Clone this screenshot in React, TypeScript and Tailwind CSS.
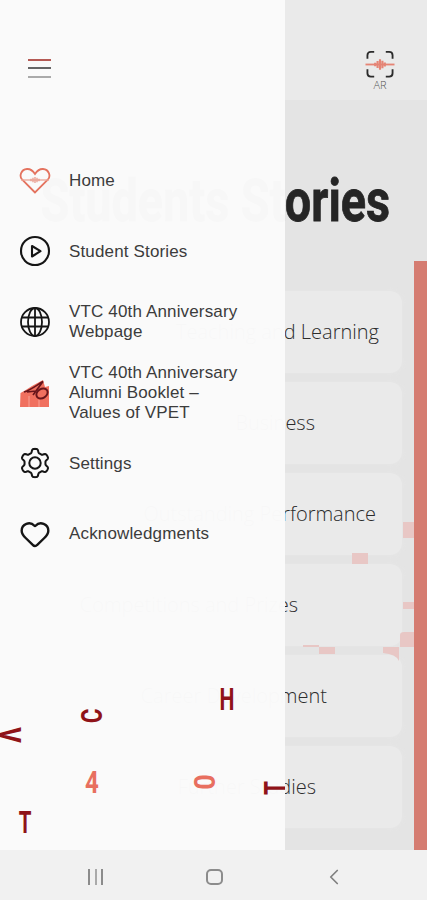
import React from 'react';
import { Heart, ChevronLeft } from 'lucide-react';

const stories = [
  { title: 'Teaching and Learning', pad: 'pr-[23px]' },
  { title: 'Business', pad: 'pr-[87px]' },
  { title: 'Outstanding Performance', pad: 'pr-[26px]' },
  { title: 'Competitions and Prizes', pad: 'pr-[104px]' },
  { title: 'Career Development', pad: 'pr-[75px]' },
  { title: 'Further Studies', pad: 'pr-[86px]' },
];

const letters = [
  { char: 'H', style: 'left-[207px] top-[679px] text-[#8f1318] scale-x-[0.66]' },
  { char: 'C', style: 'left-[72px] top-[696px] text-[#8f1318] -rotate-90 scale-x-[0.7] scale-y-[0.9]' },
  { char: 'V', style: 'left-[-10px] top-[715px] text-[#8f1318] rotate-90 scale-x-[0.74]' },
  { char: '4', style: 'left-[72px] top-[762px] text-[#e86f5f] scale-x-[0.75]' },
  { char: '0', style: 'left-[184px] top-[762px] text-[#e86f5f] rotate-90 scale-x-[0.85] scale-y-[0.9]' },
  { char: 'T', style: 'left-[5px] top-[802px] text-[#8f1318] scale-x-[0.64]' },
  { char: 'T', style: 'left-[255px] top-[768px] text-[#8f1318] -rotate-90 scale-x-[0.7]' },
];

function HomeIcon() {
  return (
    <svg width="32" height="28" viewBox="0 0 32 28" fill="none">
      <path d="M16 25.500 3 12.500C0 9 2 2.500 8 2c4-.3 6 2 8 5 2-3 4-5.300 8-5 6 .5 8 7 5 10.500Z" stroke="#e4735f" strokeWidth="1.800" />
      <path d="M2 13h28" stroke="#eba698" strokeWidth="1.300" />
      <path d="M12 11.800v2.400M14 10.800v4.400M16 10v6M18 10.800v4.400M20 11.800v2.400" stroke="#e9a093" strokeWidth="1.400" />
    </svg>
  );
}

function PlayIcon() {
  return (
    <svg width="32" height="32" viewBox="0 0 32 32" fill="none" stroke="#151515" strokeWidth="2.100">
      <circle cx="16" cy="16" r="14" />
      <path d="M13 11v10.500l8.500-5.300Z" strokeLinejoin="round" />
    </svg>
  );
}

function GlobeIcon() {
  return (
    <svg width="32" height="32" viewBox="0 0 32 32" fill="none" stroke="#151515" strokeWidth="1.800">
      <circle cx="16" cy="16" r="14" />
      <ellipse cx="16" cy="16" rx="7" ry="14" />
      <path d="M16 2v28M3 11.500h26M3 20.500h26" />
    </svg>
  );
}

function BookletIcon() {
  return (
    <svg width="32" height="32" viewBox="0 0 32 32" fill="none">
      <path d="M1.500 16 6 13.500 13 9 24 3l2 7 4-1V30h-29Z" fill="#f0705f" />
      <path d="M10 19v11M20 23v7" stroke="#f8a297" strokeWidth="1" />
      <path d="M5 15C11 13.500 18 8 24 4.500L14 18M8 15l9-1" stroke="#68151b" strokeWidth="1.700" />
      <ellipse cx="23" cy="16.500" rx="6" ry="4.600" transform="rotate(-32 23 16.500)" stroke="#68151b" strokeWidth="2" />
    </svg>
  );
}

// six rounded teeth around the hub
const gearPoints = Array.from({ length: 120 }, (_, i) => {
  const a = (i / 120) * Math.PI * 2;
  const r = 12.3 + 1.9 * Math.tanh(2.2 * Math.cos(6 * a));
  return `${(16 + r * Math.sin(a)).toFixed(2)},${(16 - r * Math.cos(a)).toFixed(2)}`;
}).join(' ');

function GearIcon() {
  return (
    <svg width="32" height="32" viewBox="0 0 32 32" fill="none" stroke="#151515" strokeWidth="2">
      <polygon points={gearPoints} strokeLinejoin="round" />
      <circle cx="16" cy="16" r="5.700" />
    </svg>
  );
}

const menu = [
  { label: 'Home', icon: <HomeIcon /> },
  { label: 'Student Stories', icon: <PlayIcon /> },
  { label: 'VTC 40th Anniversary Webpage', icon: <GlobeIcon /> },
  { label: 'VTC 40th Anniversary Alumni Booklet – Values of VPET', icon: <BookletIcon /> },
  { label: 'Settings', icon: <GearIcon /> },
  { label: 'Acknowledgments', icon: <Heart size={32} strokeWidth={1.8} color="#151515" className="shrink-0" /> },
];

function ArButton() {
  return (
    <div className="flex flex-col items-center w-[34px]">
      <svg width="32" height="29" viewBox="0 0 32 30" fill="none">
        <path d="M3 9V5.500Q3 2 6.500 2H10M22 2h3.500Q29 2 29 5.500V9M29 20v4q0 3.500-3.500 3.500H22M10 27.500H6.500Q3 27.500 3 24v-4" stroke="#2b2b2b" strokeWidth="1.900" />
        <path d="M1 15h30" stroke="#e58475" strokeWidth="1.900" />
        <path d="M11 13.300v3.400M13.500 11.500v7M16 9.500v11M18.500 11v8M21 13v4" stroke="#e58475" strokeWidth="2.200" />
      </svg>
      <span className="font-['Open_Sans'] text-[11px] leading-[11px] font-light text-[#555]">AR</span>
    </div>
  );
}

function Drawer() {
  return (
    <aside className="absolute left-0 top-0 w-[285px] h-[850px] bg-[#fafafa]/99 overflow-hidden">
      <div className="flex flex-col gap-[6.5px] pt-[58.5px] pl-7 h-[145.500px]">
        <span className="w-[23px] h-[2px] bg-[#b55a54]" />
        <span className="w-[23px] h-[2px] bg-[#666]" />
        <span className="w-[23px] h-[2px] bg-[#aaa]" />
      </div>
      <nav className="flex flex-col">
        {menu.map((item) => (
          <div key={item.label} className="flex items-center h-[70.6px] pl-[19px]">
            <div className="w-8 shrink-0 flex justify-center">{item.icon}</div>
            <span className="ml-[18px] mt-px w-[180px] font-['Liberation_Sans',sans-serif] text-[17px] leading-5 tracking-[0.15px] text-[#3c3c3c]">
              {item.label}
            </span>
          </div>
        ))}
      </nav>
      {letters.map((letter, i) => (
        <span
          key={i}
          className={`absolute w-10 h-10 flex items-center justify-center font-['Roboto',sans-serif] font-bold text-[32px] leading-none ${letter.style}`}
        >
          {letter.char}
        </span>
      ))}
    </aside>
  );
}

export default function App() {
  return (
    <div className="relative w-[427px] h-[900px] flex flex-col bg-[#e4e4e4] overflow-hidden">
      <header className="h-[100px] shrink-0 bg-[#eaeaea] flex justify-end items-start pt-[50px] pr-[30px]">
        <ArButton />
      </header>

      <main className="h-[750px] shrink-0 flex flex-col">
        <div className="h-[161px] shrink-0 flex justify-end pt-[69px] pr-[37px]">
          <h1 className="font-['Roboto',sans-serif] font-bold text-[60px] leading-[64px] text-[#252525] whitespace-nowrap origin-right scale-x-[0.78] [-webkit-text-stroke:0.8px_#252525]">
            Students Stories
          </h1>
        </div>
        <div className="flex-1 flex justify-between">
          <div className="w-[402px] pt-[30px] pl-7 flex flex-col gap-[9px]">
            {stories.map((story) => (
              <div
                key={story.title}
                className={`h-[82px] shrink-0 rounded-xl bg-[#eaeaea] shadow-[0_0_5px_1px_#e6e6e6] flex items-center justify-end ${story.pad}`}
              >
                <span className="font-['Open_Sans',sans-serif] font-light text-[20px] text-[#2c2c2c] whitespace-nowrap">
                  {story.title}
                </span>
              </div>
            ))}
          </div>
          <div className="w-[13px] bg-[#d57c71]" />
        </div>
      </main>

      {/* pieces of the red artwork showing between the cards */}
      <svg className="absolute left-[300px] top-[520px]" width="114" height="144" fill="#e8c7c5">
        <rect x="103" y="2" width="11" height="16" />
        <rect x="52" y="33" width="16" height="11" />
        <rect x="103" y="82" width="11" height="7" />
        <path d="M100 127V115q0-3 4-3h10v15Z" />
        <rect x="3" y="125" width="16" height="2" />
        <rect x="19" y="127" width="16" height="7" />
        <path d="M83 127h16v14q-3-7-16-8Z" />
      </svg>

      <Drawer />

      <footer className="h-[50px] shrink-0 bg-[#f1f1f1] flex items-center pl-[88px] pt-[3px] gap-[103px] text-[#808080]">
        <div className="w-[15px] h-4 flex justify-between">
          <span className="w-[2px] bg-[#8c8c8c]" />
          <span className="w-[2px] bg-[#aaa]" />
          <span className="w-[2px] bg-[#8c8c8c]" />
        </div>
        <div className="w-[17px] h-4 border-2 border-[#8c8c8c] rounded-[5px]" />
        <ChevronLeft size={26} strokeWidth={1.6} className="-ml-[5px]" />
      </footer>
    </div>
  );
}
